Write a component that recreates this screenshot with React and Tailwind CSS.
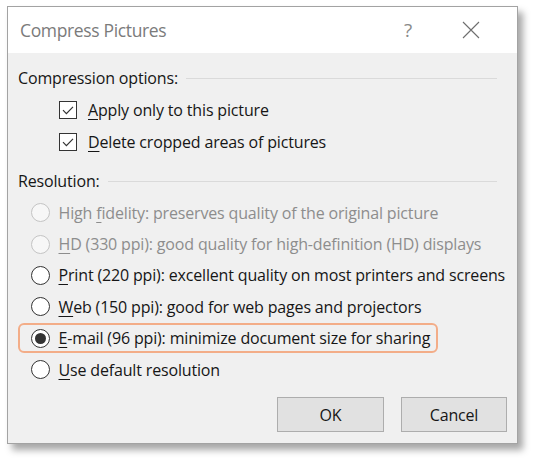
import React from "react";

const FONT = { fontFamily: '"Open Sans", "Noto Sans", sans-serif' };

// Label text with one underlined access key
function Label({ text, keyIndex, disabled }) {
  return (
    <span className={disabled ? "text-[#8d8d8d]" : "text-[#161616]"}>
      {text.slice(0, keyIndex)}
      <span className="underline underline-offset-[3px] decoration-1">{text[keyIndex]}</span>
      {text.slice(keyIndex + 1)}
    </span>
  );
}

function SectionHeader({ title, className = "" }) {
  return (
    <div className={`flex items-center h-[32px] pr-[20px] ${className}`}>
      <span className="text-[#161616]">{title}</span>
      <div className="flex-1 h-px bg-[#dadada] ml-[8px] mt-[1px]" />
    </div>
  );
}

function Checkbox({ text, keyIndex }) {
  return (
    <div className="flex items-center h-[32px] pl-[41px]">
      <div className="w-[18px] h-[18px] border border-[#333] bg-white flex items-center justify-center shrink-0">
        <svg width="14" height="14" viewBox="0 0 14 14">
          <path d="M2 7.2 L5.4 10.6 L12 3.8" fill="none" stroke="#333" strokeWidth="1.2" />
        </svg>
      </div>
      <span className="ml-[11px]">
        <Label text={text} keyIndex={keyIndex} />
      </span>
    </div>
  );
}

function Radio({ checked, disabled }) {
  return (
    <div
      className={`w-[19px] h-[19px] rounded-full border-[1.5px] flex items-center justify-center shrink-0 ${
        disabled ? "border-[#c4c4c4] bg-[#f7f7f7]" : "border-[#333] bg-white"
      }`}
    >
      {checked && <div className="w-[11px] h-[11px] rounded-full bg-[#333]" />}
    </div>
  );
}

function RadioRow({ text, keyIndex, checked, disabled }) {
  return (
    <div className="flex items-center h-[31.4px] pl-[12.5px]">
      <Radio checked={checked} disabled={disabled} />
      <span className="ml-[9px] whitespace-nowrap">
        <Label text={text} keyIndex={keyIndex} disabled={disabled} />
      </span>
    </div>
  );
}

export default function App() {
  return (
    <div className="w-[536px] h-[459px] bg-white overflow-hidden text-[16px] tracking-[-0.16px]" style={FONT}>
      <div className="ml-[7px] mt-[6px] w-[511px] h-[438px] border border-[#a3a3a3] bg-[#f0f0f0] flex flex-col shadow-[5px_6px_7px_rgba(0,0,0,0.35)]">
        {/* title bar */}
        <div className="h-[46px] bg-white flex items-center shrink-0">
          <span className="ml-[12px] mt-[1px] text-[17.5px] text-[#7b7b7b] tracking-[-0.35px]">Compress Pictures</span>
          <span className="ml-auto text-[19px] text-[#8a8a8a] mr-[50px]">?</span>
          <svg width="18" height="18" viewBox="0 0 18 18" className="mr-[37px]">
            <path d="M1 1 L17 17 M17 1 L1 17" stroke="#6e6e6e" strokeWidth="1.1" />
          </svg>
        </div>

        {/* body */}
        <div className="flex-1 flex flex-col pl-[10px] pt-[9px]">
          <SectionHeader title="Compression options:" />
          <Checkbox text="Apply only to this picture" keyIndex={0} />
          <Checkbox text="Delete cropped areas of pictures" keyIndex={0} />

          <SectionHeader title="Resolution:" className="mt-[7px]" />
          <RadioRow text="High fidelity: preserves quality of the original picture" keyIndex={5} disabled />
          <RadioRow text="HD (330 ppi): good quality for high-definition (HD) displays" keyIndex={0} disabled />
          <RadioRow text="Print (220 ppi): excellent quality on most printers and screens" keyIndex={0} />
          <RadioRow text="Web (150 ppi): good for web pages and projectors" keyIndex={0} />
          <div className="h-[31.4px] flex items-center">
            <div className="w-[420px] h-[30px] border-2 border-[#f3ad88] rounded-[6px] flex items-center pl-[10.5px]">
              <Radio checked />
              <span className="ml-[9px] whitespace-nowrap">
                <Label text="E-mail (96 ppi): minimize document size for sharing" keyIndex={0} />
              </span>
            </div>
          </div>
          <RadioRow text="Use default resolution" keyIndex={0} />

          {/* footer buttons */}
          <div className="flex justify-end gap-[17px] mt-[12px] pr-[10px]">
            <button className="w-[107px] h-[35px] bg-[#e1e1e1] border border-[#adadad] text-[#161616]">OK</button>
            <button className="w-[106px] h-[35px] bg-[#e1e1e1] border border-[#adadad] text-[#161616]">Cancel</button>
          </div>
        </div>
      </div>
    </div>
  );
}
